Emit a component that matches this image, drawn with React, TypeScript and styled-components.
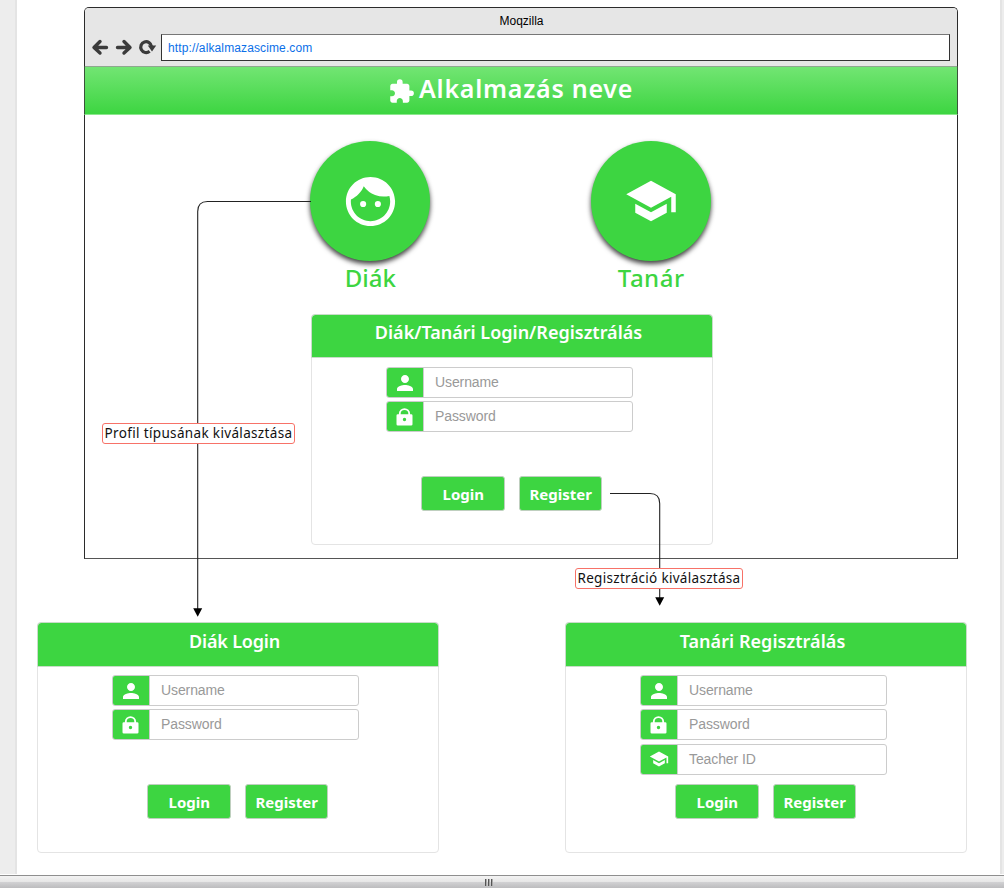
import React from "react";
import styled, { createGlobalStyle } from "styled-components";
import { MdExtension, MdFace, MdPerson, MdSchool } from "react-icons/md";

const GREEN = "#3dd541";

const GlobalStyle = createGlobalStyle`
  * { box-sizing: border-box; }
  body { margin: 0; background: #fff; overflow: hidden; }
`;

const Screen = styled.div`
  display: flex;
  flex-direction: column;
  width: 1004px;
  height: 888px;
  font-family: "Noto Sans", "Open Sans", sans-serif;
`;

const Workspace = styled.div`
  display: flex;
  height: 875px;
`;

const Gutter = styled.div<{ $side: "left" | "right" }>`
  flex: none;
  width: ${(p) => (p.$side === "left" ? 17 : 4)}px;
  height: 874px;
  background: #ededed;
  border-${(p) => (p.$side === "left" ? "right" : "left")}: 2px solid #e4e4e4;
`;

const Canvas = styled.main`
  position: relative;
  flex: 1;
  background: #fff;
`;

const BottomBar = styled.footer`
  display: flex;
  align-items: center;
  height: 13px;
  padding-left: 485px;
  gap: 1px;
  border-top: 1px solid #8f8f8f;
  background: linear-gradient(#f3f3f3 0, #e6e6e6 6px, #d2d2d4 6px, #bcbcbe 12px);
`;

const Grip = styled.i`
  width: 2px;
  height: 7px;
  background: linear-gradient(90deg, #555 50%, #aaa 50%);
`;

/* Items placed freely on the canvas; coordinates are relative to its left edge. */
const Node = styled.div<{ $x: number; $y: number }>`
  position: absolute;
  left: ${(p) => p.$x - 17}px;
  top: ${(p) => p.$y}px;
`;

const BrowserFrame = styled(Node)`
  display: flex;
  flex-direction: column;
  width: 874px;
  height: 552px;
  border: 1px solid #2b2b2b;
  border-bottom-color: #555;
  border-radius: 5px 5px 0 0;
  background: #fff;
`;

const BrowserChrome = styled.header`
  height: 58px;
  background: #e6e6e6;
  border-radius: 4px 4px 0 0;
  font-family: "Liberation Sans", Arial, sans-serif;
  font-size: 12px;
`;

const WindowTitle = styled.div`
  height: 26px;
  line-height: 27px;
  padding-left: 1px;
  text-align: center;
  color: #000;
`;

const Toolbar = styled.div`
  display: flex;
  align-items: center;
  padding: 0 7px 0 6px;
  height: 27px;
`;

const NavIcons = styled.svg`
  flex: none;
  width: 70px;
  height: 27px;
`;

const AddressBar = styled.div`
  flex: 1;
  height: 27px;
  padding-left: 6px;
  border: 1px solid #333;
  border-top-color: #777;
  background: #fff;
  color: #0b6fe8;
  line-height: 26px;
  letter-spacing: 0.12px;
`;

const AppBar = styled.div`
  display: flex;
  align-items: center;
  height: 49px;
  margin: 0 -1px;
  padding-left: 303px;
  border: 1px solid rgba(70, 110, 70, 0.6);
  border-bottom-color: #8be88d;
  background: linear-gradient(#72e573, ${GREEN});
  background-clip: padding-box;
  color: #fff;
  svg { margin: 2px 4px 0 0; flex: none; }
`;

const AppName = styled.h1`
  margin: -5px 0 0;
  font-size: 25px;
  line-height: 34px;
  font-weight: 600;
  letter-spacing: 0.75px;
  white-space: nowrap;
`;

const Role = styled(Node)`
  display: flex;
  flex-direction: column;
  align-items: center;
  width: 120px;
  color: ${GREEN};
`;

const RoleCircle = styled.div`
  display: flex;
  align-items: center;
  justify-content: center;
  width: 120px;
  height: 120px;
  border-radius: 50%;
  background: ${GREEN};
  color: #fff;
  box-shadow: 0 3px 5px rgba(0, 0, 0, 0.75);
`;

const RoleName = styled.div<{ $spacing: number }>`
  font-size: 24px;
  line-height: 34px;
  font-weight: 500;
  letter-spacing: ${(p) => p.$spacing}px;
  white-space: nowrap;
`;

const Panel = styled(Node)`
  width: 402px;
  height: 231px;
  border: 1px solid #e4e4e4;
  border-radius: 4px;
  background: #fff;
`;

const PanelTitle = styled.h2<{ $spacing: number; $drop: number }>`
  height: ${(p) => 44 + p.$drop}px;
  margin: -1px -1px 0;
  padding: ${(p) => 5 + p.$drop}px 7px 0 0;
  border: 1px solid #c9dcc9;
  border-radius: 4px 4px 0 0;
  background: ${GREEN};
  background-clip: padding-box;
  color: #fff;
  font-size: 18px;
  line-height: 25px;
  font-weight: 600;
  letter-spacing: ${(p) => p.$spacing}px;
  text-align: center;
  white-space: nowrap;
`;

const Fields = styled.div<{ $drop: number }>`
  display: flex;
  flex-direction: column;
  gap: 3.15px;
  height: ${(p) => 109 - p.$drop}px;
  padding: ${(p) => 9 - p.$drop * 0.7}px 0 0 74px;
`;

const Field = styled.div`
  display: flex;
  flex: none;
  width: 247px;
  height: 31px;
  border: 1px solid #ccc;
  border-radius: 3px;
  overflow: hidden;
  font: 14px/29px "Liberation Sans", Arial, sans-serif;
  color: #999;
`;

const FieldIcon = styled.div`
  display: flex;
  align-items: center;
  justify-content: center;
  width: 37px;
  background: ${GREEN};
  border-right: 1px solid #ccc;
  color: #fff;
`;

const Placeholder = styled.span`
  padding-left: 11px;
  letter-spacing: -0.1px;
`;

const Actions = styled.div`
  display: flex;
  gap: 14px;
  padding: 9px 0 0 109px;
`;

const Button = styled.button`
  width: 83.5px;
  height: 35px;
  padding: 1px 0 0 1px;
  border: 1px solid #bfcfbf;
  border-radius: 3px;
  background: ${GREEN};
  color: #fff;
  font: 700 15px/32px "Noto Sans", sans-serif;
`;

const Connectors = styled.svg`
  position: absolute;
  left: -17px;
  top: 0;
  width: 1004px;
  height: 875px;
  pointer-events: none;
`;

const Note = styled(Node)<{ $w: number; $spacing: number }>`
  width: ${(p) => p.$w}px;
  height: 21px;
  border: 1px solid #f77268;
  border-radius: 3px;
  background: #fff;
  color: #111;
  font-size: 13.5px;
  line-height: 18px;
  letter-spacing: ${(p) => p.$spacing}px;
  text-align: center;
  white-space: nowrap;
`;

const LockIcon = () => (
  <svg width="18" height="18" viewBox="0 0 18 18" fill="currentColor">
    <path d="M3.8 7V5.6a4.7 4.5 0 0 1 9.4 0V7" fill="none" stroke="currentColor" strokeWidth="1.8" />
    <path
      fillRule="evenodd"
      d="M1.8 6.2h13.4a1.3 1.3 0 0 1 1.3 1.3v8.7a1.3 1.3 0 0 1-1.3 1.3H1.8a1.3 1.3 0 0 1-1.3-1.3V7.5a1.3 1.3 0 0 1 1.3-1.3zM8.5 9.8a1.7 1.7 0 1 0 0 3.4a1.7 1.7 0 0 0 0-3.4z"
    />
  </svg>
);

const icons = {
  user: <MdPerson size={24} />,
  lock: <LockIcon />,
  school: <MdSchool size={20} />,
};

type FieldDef = [keyof typeof icons, string];
const credentials: FieldDef[] = [["user", "Username"], ["lock", "Password"]];

type PanelProps = { x: number; y: number; title: string; spacing: number; drop: number; fields: FieldDef[] };

function LoginPanel({ x, y, title, spacing, drop, fields }: PanelProps) {
  return (
    <Panel $x={x} $y={y}>
      <PanelTitle $spacing={spacing} $drop={drop}>{title}</PanelTitle>
      <Fields $drop={drop}>
        {fields.map(([icon, text]) => (
          <Field key={text}>
            <FieldIcon>{icons[icon]}</FieldIcon>
            <Placeholder>{text}</Placeholder>
          </Field>
        ))}
      </Fields>
      <Actions>
        <Button>Login</Button>
        <Button>Register</Button>
      </Actions>
    </Panel>
  );
}

export default function App() {
  return (
    <Screen>
      <GlobalStyle />
      <Workspace>
        <Gutter $side="left" />
        <Canvas>
          <BrowserFrame $x={84} $y={7}>
            <BrowserChrome>
              <WindowTitle>Moqzilla</WindowTitle>
              <Toolbar>
                <NavIcons viewBox="91 34 70 27" fill="none" stroke="#3b3b3b" strokeWidth="3.4" strokeLinecap="round" strokeLinejoin="round">
                  <path d="M106.5 47.5H94.5M100 41.5l-6 6l6 5.5" />
                  <path d="M117.5 47.5H129.5M124 41.5l6 6l-6 5.5" />
                  <path d="M149.6 51.3A5.4 5.4 0 1 1 151.5 46.5" strokeWidth="3.2" strokeLinecap="butt" />
                  <path d="M147.8 45.5h8.4l-4.2 6z" fill="#3b3b3b" stroke="none" />
                </NavIcons>
                <AddressBar>http://alkalmazascime.com</AddressBar>
              </Toolbar>
            </BrowserChrome>
            <AppBar>
              <MdExtension size={27} />
              <AppName>Alkalmazás neve</AppName>
            </AppBar>
          </BrowserFrame>
          <Role $x={310.4} $y={141}>
            <RoleCircle><MdFace size={59} /></RoleCircle>
            <RoleName $spacing={0}>Diák</RoleName>
          </Role>
          <Role $x={591.2} $y={141}>
            <RoleCircle><MdSchool size={54} /></RoleCircle>
            <RoleName $spacing={0.5}>Tanár</RoleName>
          </Role>
          <LoginPanel x={311} y={314} title="Diák/Tanári Login/Regisztrálás" spacing={0} drop={0} fields={credentials} />
          <LoginPanel x={37} y={622} title="Diák Login" spacing={-0.2} drop={1} fields={credentials} />
          <LoginPanel x={565} y={622} title="Tanári Regisztrálás" spacing={0.05} drop={1} fields={[...credentials, ["school", "Teacher ID"]]} />
          <Connectors viewBox="0 0 1004 875" fill="none" stroke="#222" strokeWidth="1.1">
            <path d="M311 201.500H207.500Q197.700 201.500 197.700 211.500V609" />
            <path d="M193.200 608.300h9l-4.500 8.400z" fill="#000" stroke="none" />
            <path d="M610 493.500H650Q659.700 493.500 659.700 503.500V598" />
            <path d="M655.200 597.300h9l-4.500 8.400z" fill="#000" stroke="none" />
          </Connectors>
          <Note $x={102} $y={423} $w={193} $spacing={0.34}>Profil típusának kiválasztása</Note>
          <Note $x={575} $y={568} $w={168} $spacing={0.3}>Regisztráció kiválasztása</Note>
        </Canvas>
        <Gutter $side="right" />
      </Workspace>
      <BottomBar><Grip /><Grip /><Grip /></BottomBar>
    </Screen>
  );
}
